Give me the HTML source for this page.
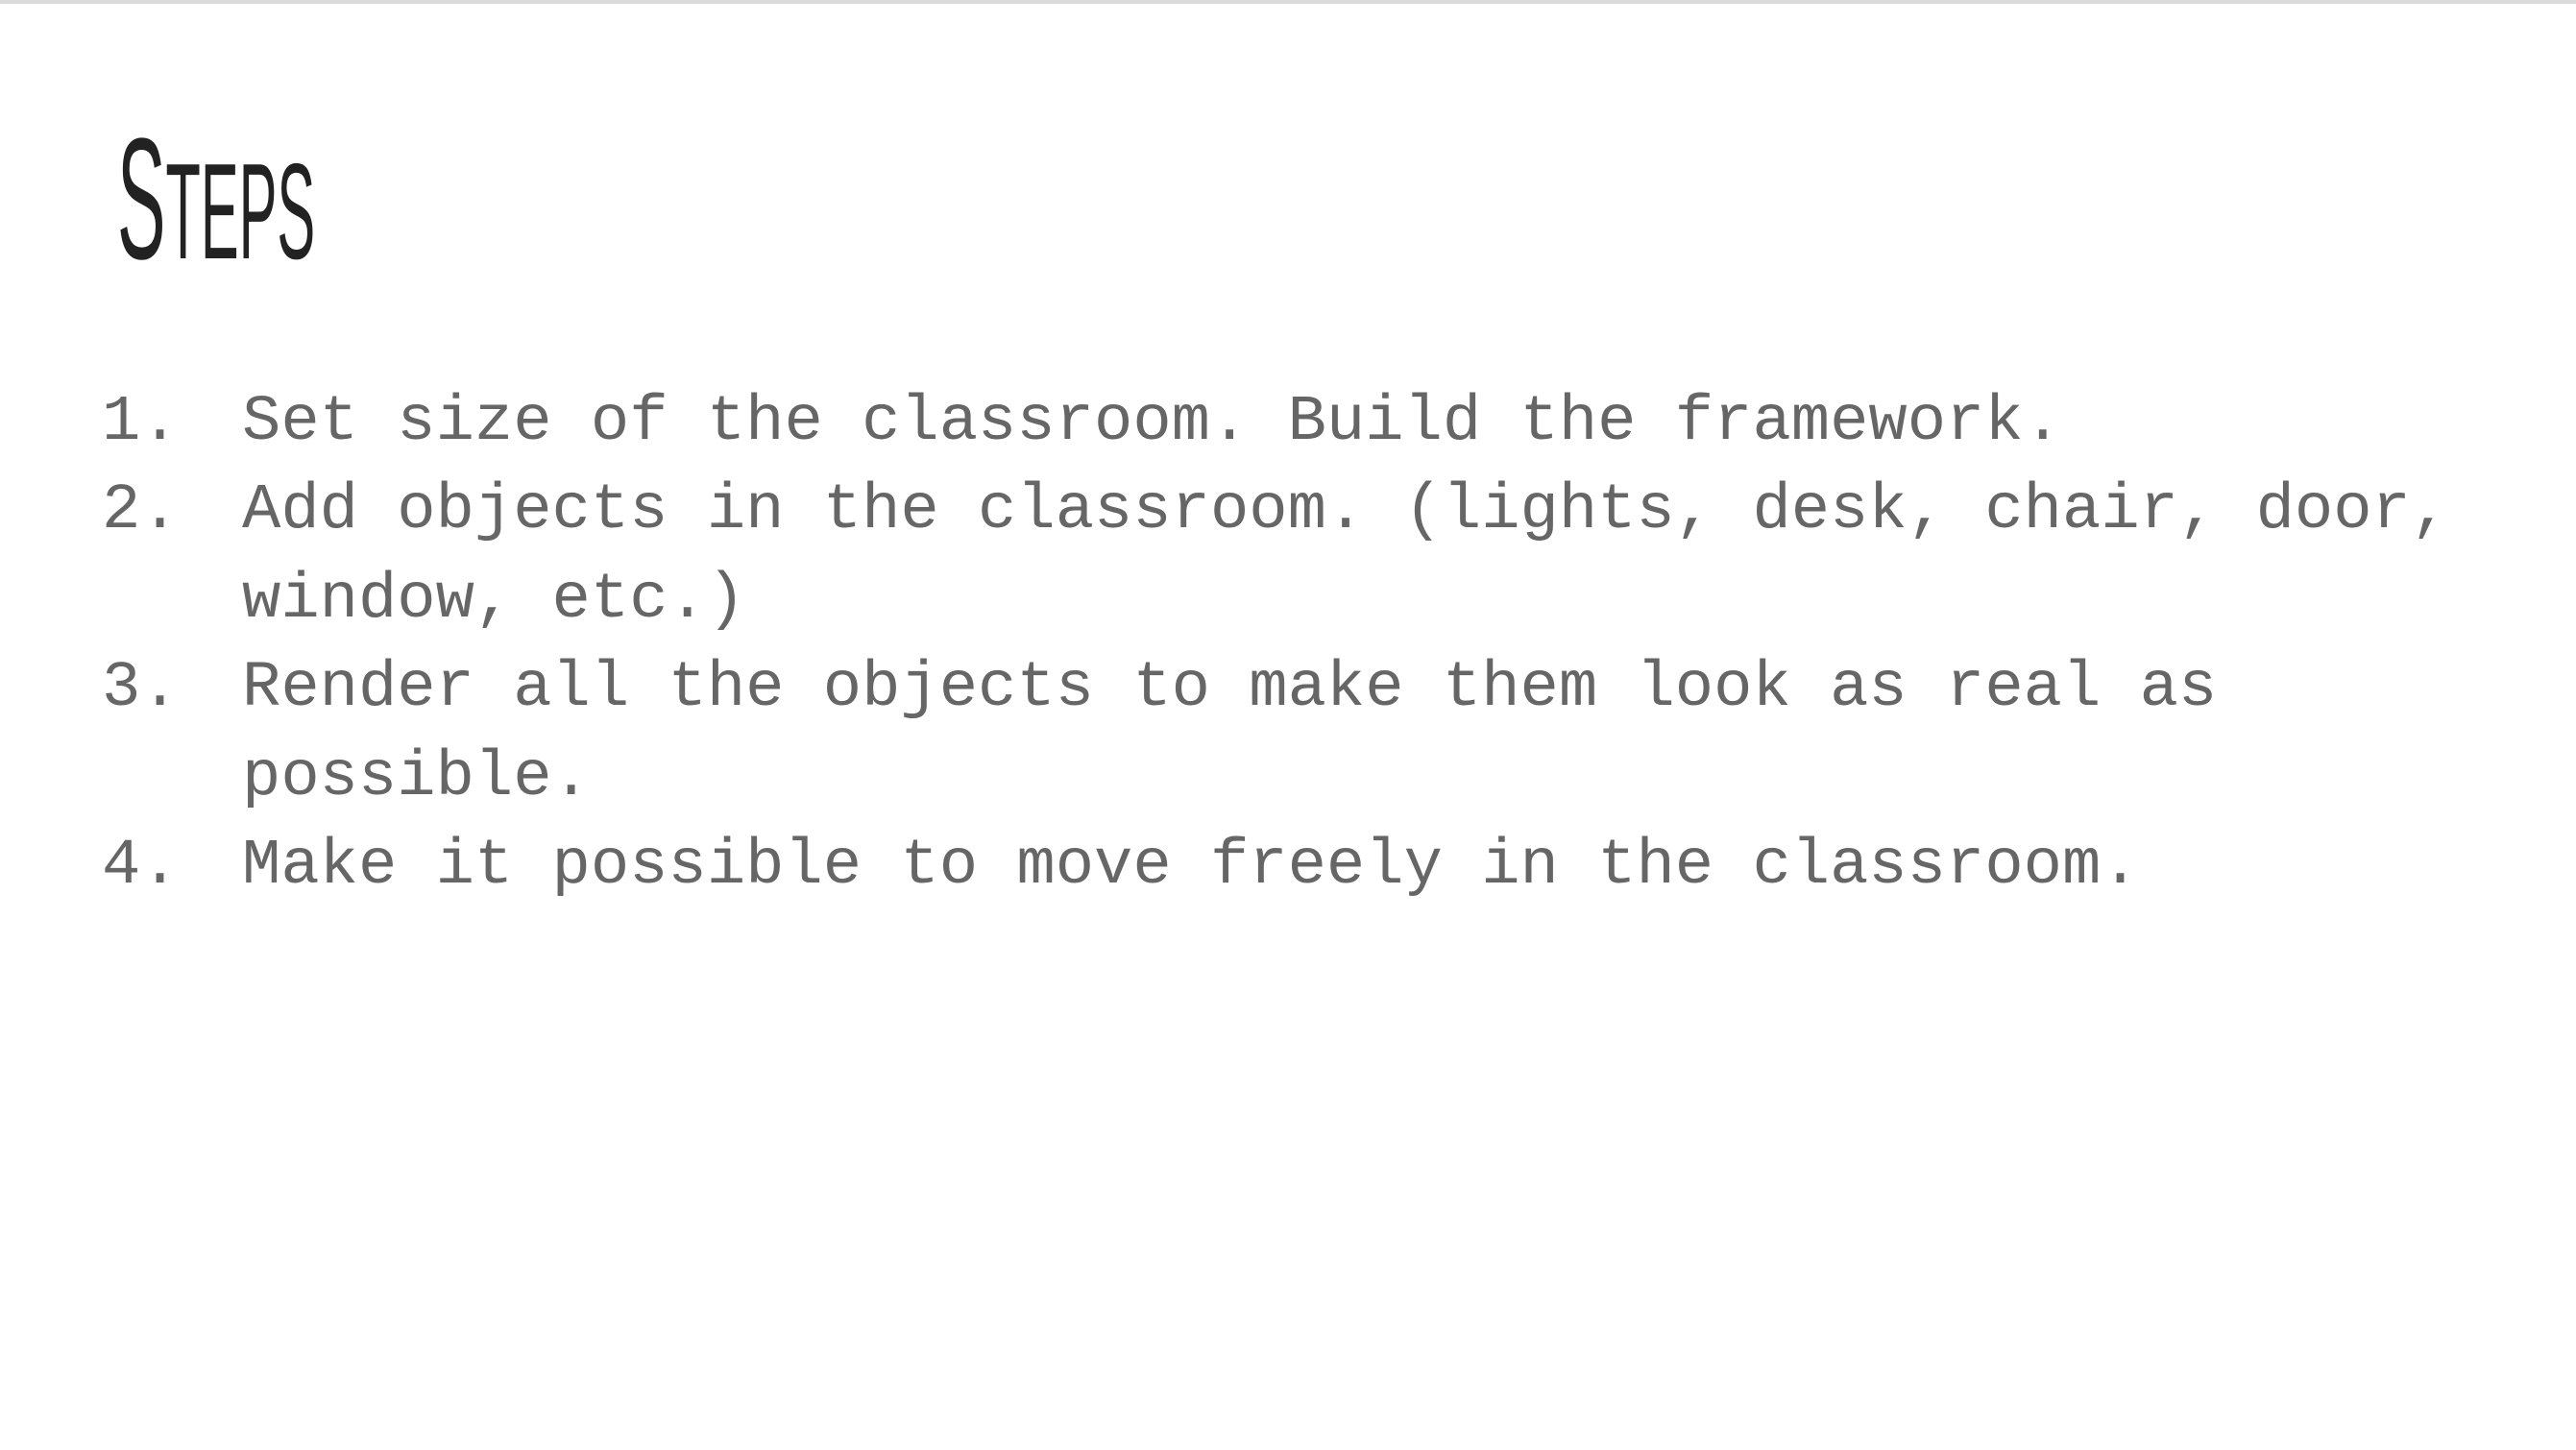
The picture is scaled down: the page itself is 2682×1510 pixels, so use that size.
<!DOCTYPE html>
<html><head><style>
html,body{margin:0;padding:0;background:#fff;}
body{width:2682px;height:1510px;position:relative;overflow:hidden;}
.top{position:absolute;left:0;top:0;width:2682px;height:4px;background:#dadada;}
.title{position:absolute;left:122px;top:118px;white-space:nowrap;color:#222;font-family:"Liberation Sans Narrow","Liberation Sans",sans-serif;transform:scaleX(0.42);transform-origin:left top;line-height:1;}
.title .b{font-size:180px;}
.title .s{font-size:142px;}
.l,.n{position:absolute;font-family:"Liberation Mono",monospace;font-size:67.2px;color:#666;white-space:pre;line-height:1;}
.n{left:106px;}
.l{left:252px;}
</style></head><body>
<div class="top"></div>
<div class="title"><span class="b">S</span><span class="s">TEPS</span></div>
<div class="n" style="top:407px">1.</div><div class="l" style="top:407px">Set size of the classroom. Build the framework.</div>
<div class="n" style="top:499px">2.</div><div class="l" style="top:499px">Add objects in the classroom. (lights, desk, chair, door,</div>
<div class="l" style="top:592px">window, etc.)</div>
<div class="n" style="top:684px">3.</div><div class="l" style="top:684px">Render all the objects to make them look as real as</div>
<div class="l" style="top:777px">possible.</div>
<div class="n" style="top:869px">4.</div><div class="l" style="top:869px">Make it possible to move freely in the classroom.</div>
</body></html>
